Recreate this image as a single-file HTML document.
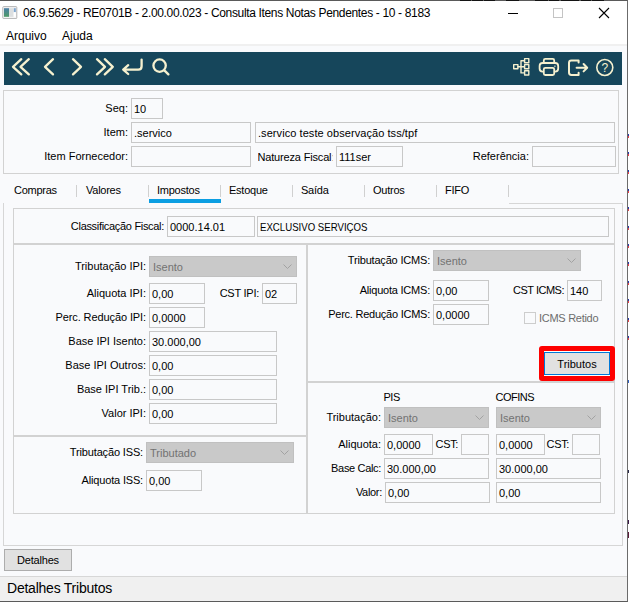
<!DOCTYPE html>
<html><head><meta charset="utf-8"><title>Consulta Itens Notas Pendentes</title>
<style>
html,body{margin:0;padding:0}
body{width:629px;height:602px;position:relative;overflow:hidden;background:#fff;font-family:"Liberation Sans",sans-serif;font-size:11px;color:#000}
.a{position:absolute;box-sizing:border-box}
.win{left:0;top:0;width:628px;height:602px;background:#f9fafc;border-top:1px solid #5a5a5a;border-right:1px solid #6b6b6b;border-bottom:1px solid #5a5a5a}
.title{left:0;top:1px;width:627px;height:25px;background:#fff}
.ttext{left:23px;top:5px;font-size:12px;line-height:16px;white-space:nowrap;letter-spacing:-0.34px}
.menu{left:0;top:26px;width:627px;height:18px;background:#fff}
.menu span{position:absolute;top:2px;font-size:12px;line-height:16px}
.tb{left:4px;top:52px;width:618px;height:33px;background:#16465b}
.box{border:1px solid #d2d2d2}
.inp{position:absolute;box-sizing:border-box;height:21px;border:1px solid #c8c8c8;background:#f9fafc;padding:0 0 0 2px;line-height:20px;white-space:nowrap;font-size:11px}
.cmb{position:absolute;box-sizing:border-box;height:21px;background:#c9c9c9;border:1px solid #c0c0c0;color:#727272;padding:0 0 0 3px;line-height:21px;white-space:nowrap;font-size:11px}
.cmb svg{position:absolute;right:4px;top:7px}
.l{position:absolute;white-space:nowrap;line-height:21px;height:21px;text-align:right;font-size:11px}
.tab{position:absolute;top:182px;height:16px;line-height:16px;font-size:11px;letter-spacing:-0.25px}
.sep{position:absolute;top:185px;width:1px;height:12px;background:#d0d0d0}
.btn{position:absolute;box-sizing:border-box;background:#e1e1e1;border:1px solid #adadad;text-align:center;font-size:11px}
</style></head><body>
<div class="a win"></div>
<div class="a title"></div>
<!-- app icon -->
<svg class="a" style="left:2px;top:6px" width="16" height="13" viewBox="0 0 16 13"><defs><linearGradient id="ig" x1="0" y1="0" x2="0" y2="1"><stop offset="0" stop-color="#4b7fa6"/><stop offset="1" stop-color="#4e9a66"/></linearGradient></defs><rect x="0.8" y="0.6" width="14" height="12" rx="0.8" fill="#f4f4f4" stroke="#b4b4b4"/><rect x="2" y="2.2" width="5" height="8.6" fill="url(#ig)"/><rect x="7" y="2.2" width="4.4" height="8.6" fill="#dcdfe0"/><rect x="11.8" y="2.2" width="2" height="4" fill="#7ea6cf"/><rect x="11.8" y="6.2" width="2" height="4.6" fill="#fff"/></svg>
<div class="a ttext">06.9.5629 - RE0701B - 2.00.00.023 - Consulta Itens Notas Pendentes - 10 - 8183</div>
<!-- window controls -->
<svg class="a" style="left:495px;top:1px" width="131" height="25" viewBox="0 0 131 25"><path d="M13 12.5H23" stroke="#000" stroke-width="1"/><rect x="58.5" y="7.5" width="9" height="9" fill="none" stroke="#c4c4c4"/><path d="M104 7L114 17M114 7L104 17" stroke="#000" stroke-width="1.1"/></svg>
<div class="a menu"><span style="left:6px">Arquivo</span><span style="left:62px">Ajuda</span></div>
<div class="a" style="left:0;top:44px;width:627px;height:2px;background:#f0f0f0"></div>
<div class="a tb"></div>
<!-- toolbar icons -->
<svg class="a" style="left:4px;top:52px" width="619" height="33" viewBox="0 0 619 33" fill="none" stroke="#f6f1cf" stroke-width="2.3" stroke-linecap="round" stroke-linejoin="round">
<path d="M17.3 7.2L9 14.8L17.3 22.4M24.8 7.2L16.5 14.8L24.8 22.4"/>
<path d="M49 7.2L41 14.8L49 22.4"/>
<path d="M69 7.2L77 14.8L69 22.4"/>
<path d="M93 7.2L101 14.8L93 22.4M100.8 7.2L108.8 14.8L100.8 22.4"/>
<path d="M137.6 7.6V14.2Q137.6 17.6 134.2 17.6H119.4M124.2 13.2L119.2 17.6L124.2 22"/>
<circle cx="155.6" cy="13.6" r="6.2"/><path d="M160.4 18.4L164.4 22.4"/>
<g stroke-width="1.4">
<rect x="509.7" y="12.6" width="4.2" height="4.2"/><rect x="520.6" y="6.6" width="4.2" height="4.2"/><rect x="520.6" y="12.6" width="4.2" height="4.2"/><rect x="520.6" y="18.8" width="4.2" height="4.2"/>
<path d="M514 14.7H520.5M517 8.7V20.9M517 8.7H520.5M517 20.9H520.5"/>
</g>
<g stroke-width="1.8">
<path d="M539.8 11V8.4Q539.8 6.9 541.3 6.9H548.7Q550.2 6.9 550.2 8.4V11"/>
<rect x="535.6" y="11" width="18.6" height="8.6" rx="3"/>
<rect x="539.8" y="15.8" width="10.4" height="7.2" rx="1.5" fill="#16465b"/>
<path d="M550.8 14.2H551" stroke-width="1.3"/>
</g>
<g stroke-width="2">
<path d="M574.6 8.4H567.4Q565 8.4 565 10.8V20.6Q565 23 567.4 23H574.6M574.6 8.4V10.6M574.6 23V20.8"/>
<path d="M572.6 15.7H583M579.6 12L583.2 15.7L579.6 19.4"/>
</g>
<circle cx="600.8" cy="15.5" r="8" stroke-width="1.6"/>
<text x="600.8" y="19.6" text-anchor="middle" font-family="Liberation Sans, sans-serif" font-size="12" fill="#f6f1cf" stroke="none">?</text>
</svg>
<div class="a box" style="left:3px;top:90px;width:616px;height:84px"></div>
<div class="l" style="right:501px;top:98px;">Seq:</div>
<div class="inp" style="left:131px;top:98px;width:32px">10</div>
<div class="l" style="right:501px;top:122px;">Item:</div>
<div class="inp" style="left:131px;top:122px;width:120px">.servico</div>
<div class="inp" style="left:255px;top:122px;width:360px;letter-spacing:0.065px">.servico teste observação tss/tpf</div>
<div class="l" style="right:501px;top:146px;">Item Fornecedor:</div>
<div class="inp" style="left:131px;top:146px;width:120px"></div>
<div class="l" style="left:257.5px;top:147px;letter-spacing:-0.17px;width:75.5px;overflow:hidden;text-align:left">Natureza Fiscal<span style="color:#9a9a9a">:</span></div>
<div class="inp" style="left:336px;top:146px;width:67px">111ser</div>
<div class="l" style="right:100px;top:146px;">Referência:</div>
<div class="inp" style="left:532px;top:146px;width:84px"></div>
<div class="tab" style="left:14px">Compras</div>
<div class="tab" style="left:86px">Valores</div>
<div class="tab" style="left:157px">Impostos</div>
<div class="tab" style="left:229px">Estoque</div>
<div class="tab" style="left:301px">Saída</div>
<div class="tab" style="left:373px">Outros</div>
<div class="tab" style="left:445px">FIFO</div>
<div class="sep" style="left:76px"></div>
<div class="sep" style="left:148px"></div>
<div class="sep" style="left:220px"></div>
<div class="sep" style="left:292px"></div>
<div class="sep" style="left:364px"></div>
<div class="sep" style="left:436px"></div>
<div class="sep" style="left:508px"></div>
<div class="a" style="left:149px;top:199px;width:72px;height:4px;background:#0b9ee2"></div>
<div class="a" style="left:3px;top:203px;width:620px;height:343px;border:1px solid #d6d6d6;border-top:none"></div>
<div class="a" style="left:509px;top:203px;width:114px;height:1px;background:#d6d6d6"></div>
<div class="a box" style="left:13px;top:208px;width:602px;height:36px"></div>
<div class="l" style="right:465px;top:216px;letter-spacing:-0.31px">Classificação Fiscal:</div>
<div class="inp" style="left:167px;top:216px;width:88px">0000.14.01</div>
<div class="inp" style="left:257px;top:216px;width:352px"><span style="display:inline-block;transform:scaleX(0.876);transform-origin:0 50%">EXCLUSIVO SERVIÇOS</span></div>
<div class="a box" style="left:13px;top:244px;width:294px;height:192px"></div>
<div class="a box" style="left:13px;top:436px;width:294px;height:78px"></div>
<div class="a box" style="left:307px;top:244px;width:308px;height:138px"></div>
<div class="a box" style="left:307px;top:382px;width:308px;height:132px"></div>
<div class="l" style="right:483px;top:256px;">Tributação IPI:</div>
<div class="cmb" style="left:149px;top:256px;width:148px">Isento<svg width="9" height="6" viewBox="0 0 9 6"><path d="M0.5 0.5L4.5 4.5L8.5 0.5" fill="none" stroke="#a2a2a2" stroke-width="1"/></svg></div>
<div class="l" style="right:483px;top:283px;">Aliquota IPI:</div>
<div class="inp" style="left:149px;top:283px;width:56px">0,00</div>
<div class="l" style="right:370px;top:283px;letter-spacing:-0.25px">CST IPI:</div>
<div class="inp" style="left:262px;top:283px;width:35px">02</div>
<div class="l" style="right:483px;top:307px;letter-spacing:-0.1px">Perc. Redução IPI:</div>
<div class="inp" style="left:149px;top:307px;width:56px">0,0000</div>
<div class="l" style="right:483px;top:331px;">Base IPI Isento:</div>
<div class="inp" style="left:149px;top:331px;width:128px">30.000,00</div>
<div class="l" style="right:483px;top:355px;">Base IPI Outros:</div>
<div class="inp" style="left:149px;top:355px;width:128px">0,00</div>
<div class="l" style="right:483px;top:379px;">Base IPI Trib.:</div>
<div class="inp" style="left:149px;top:379px;width:128px">0,00</div>
<div class="l" style="right:483px;top:403px;">Valor IPI:</div>
<div class="inp" style="left:149px;top:403px;width:128px">0,00</div>
<div class="l" style="right:486px;top:442px;letter-spacing:-0.15px">Tributação ISS:</div>
<div class="cmb" style="left:146px;top:442px;width:148px">Tributado<svg width="9" height="6" viewBox="0 0 9 6"><path d="M0.5 0.5L4.5 4.5L8.5 0.5" fill="none" stroke="#a2a2a2" stroke-width="1"/></svg></div>
<div class="l" style="right:486px;top:470px;letter-spacing:-0.17px">Aliquota ISS:</div>
<div class="inp" style="left:146px;top:470px;width:56px">0,00</div>
<div class="l" style="right:199px;top:250px;letter-spacing:-0.19px">Tributação ICMS:</div>
<div class="cmb" style="left:433px;top:250px;width:148px">Isento<svg width="9" height="6" viewBox="0 0 9 6"><path d="M0.5 0.5L4.5 4.5L8.5 0.5" fill="none" stroke="#a2a2a2" stroke-width="1"/></svg></div>
<div class="l" style="right:199px;top:280px;letter-spacing:-0.22px">Aliquota ICMS:</div>
<div class="inp" style="left:433px;top:280px;width:56px">0,00</div>
<div class="l" style="right:65px;top:280px;letter-spacing:-0.5px">CST ICMS:</div>
<div class="inp" style="left:567px;top:280px;width:35px">140</div>
<div class="l" style="right:199px;top:304px;letter-spacing:-0.24px">Perc. Redução ICMS:</div>
<div class="inp" style="left:433px;top:304px;width:56px">0,0000</div>
<div class="a" style="left:524px;top:312px;width:12px;height:12px;border:1px solid #cdcdcd;background:#f9fafc"></div>
<div class="l" style="left:539px;top:308px;color:#6d6d6d;letter-spacing:-0.28px">ICMS Retido</div>
<div class="btn" style="left:544px;top:352px;width:66px;height:23px;line-height:22px;border-color:#0078d7;box-shadow:0 0 0 1px #fff">Tributos</div>
<div class="a" style="left:539px;top:346px;width:76px;height:35px;border:5px solid #fe0000;border-radius:3px"></div>
<div class="l" style="left:383.5px;top:387px;letter-spacing:-0.5px">PIS</div>
<div class="l" style="left:495.5px;top:387px;letter-spacing:-0.5px">COFINS</div>
<div class="l" style="right:248px;top:407px;">Tributação:</div>
<div class="cmb" style="left:384px;top:407px;width:105px">Isento<svg width="9" height="6" viewBox="0 0 9 6"><path d="M0.5 0.5L4.5 4.5L8.5 0.5" fill="none" stroke="#a2a2a2" stroke-width="1"/></svg></div>
<div class="cmb" style="left:496px;top:407px;width:105px">Isento<svg width="9" height="6" viewBox="0 0 9 6"><path d="M0.5 0.5L4.5 4.5L8.5 0.5" fill="none" stroke="#a2a2a2" stroke-width="1"/></svg></div>
<div class="l" style="right:248px;top:434px;">Aliquota:</div>
<div class="inp" style="left:384px;top:434px;width:49px">0,0000</div>
<div class="l" style="right:171px;top:434px;letter-spacing:-0.35px">CST:</div>
<div class="inp" style="left:461px;top:434px;width:28px"></div>
<div class="inp" style="left:496px;top:434px;width:49px">0,0000</div>
<div class="l" style="right:60px;top:434px;letter-spacing:-0.35px">CST:</div>
<div class="inp" style="left:572px;top:434px;width:28px"></div>
<div class="l" style="right:248px;top:458px;letter-spacing:-0.33px">Base Calc:</div>
<div class="inp" style="left:384px;top:458px;width:105px">30.000,00</div>
<div class="inp" style="left:496px;top:458px;width:105px">30.000,00</div>
<div class="l" style="right:247px;top:482px;letter-spacing:-0.3px">Valor:</div>
<div class="inp" style="left:385px;top:482px;width:105px">0,00</div>
<div class="inp" style="left:496px;top:482px;width:105px">0,00</div>
<div class="btn" style="left:4px;top:549px;width:68px;height:22px;line-height:20px;letter-spacing:-0.2px">Detalhes</div>
<div class="a" style="left:0;top:576px;width:627px;height:25px;background:#f0f0f0;border-top:1px solid #d7d7d7"></div>
<div class="a" style="left:7px;top:580px;font-size:14px;line-height:17px;white-space:nowrap;letter-spacing:-0.23px">Detalhes Tributos</div>
<!-- background window remnants -->
<div class="a" style="left:460px;top:0;width:11px;height:1px;background:#141414"></div>
<div class="a" style="left:472px;top:0;width:11px;height:1px;background:#141414"></div>
<div class="a" style="left:484px;top:0;width:11px;height:1px;background:#141414"></div>
<div class="a" style="left:506px;top:0;width:13px;height:1px;background:#141414"></div>
<div class="a" style="left:535px;top:0;width:13px;height:1px;background:#141414"></div>
<div class="a" style="left:549px;top:0;width:10px;height:1px;background:#141414"></div>
<div class="a" style="left:561px;top:0;width:18px;height:1px;background:#141414"></div>
<div class="a" style="left:581px;top:0;width:10px;height:1px;background:#141414"></div>
<div class="a" style="left:592px;top:0;width:12px;height:1px;background:#141414"></div>
<div class="a" style="left:628px;top:134px;width:1px;height:2px;background:#2a3aa8"></div><div class="a" style="left:628px;top:136px;width:1px;height:2px;background:#e8404a"></div>
<div class="a" style="left:628px;top:152px;width:1px;height:2px;background:#2a3aa8"></div><div class="a" style="left:628px;top:154px;width:1px;height:2px;background:#e8404a"></div>
<div class="a" style="left:628px;top:170px;width:1px;height:2px;background:#2a3aa8"></div><div class="a" style="left:628px;top:172px;width:1px;height:2px;background:#e8404a"></div>
<div class="a" style="left:628px;top:189px;width:1px;height:2px;background:#2a3aa8"></div><div class="a" style="left:628px;top:191px;width:1px;height:2px;background:#e8404a"></div>
<div class="a" style="left:628px;top:207px;width:1px;height:2px;background:#2a3aa8"></div><div class="a" style="left:628px;top:209px;width:1px;height:2px;background:#e8404a"></div>
<div class="a" style="left:628px;top:226px;width:1px;height:2px;background:#2a3aa8"></div><div class="a" style="left:628px;top:228px;width:1px;height:2px;background:#e8404a"></div>
<div class="a" style="left:628px;top:244px;width:1px;height:2px;background:#2a3aa8"></div><div class="a" style="left:628px;top:246px;width:1px;height:2px;background:#e8404a"></div>
<div class="a" style="left:628px;top:262px;width:1px;height:2px;background:#2a3aa8"></div><div class="a" style="left:628px;top:264px;width:1px;height:2px;background:#e8404a"></div>
<div class="a" style="left:628px;top:281px;width:1px;height:2px;background:#2a3aa8"></div><div class="a" style="left:628px;top:283px;width:1px;height:2px;background:#e8404a"></div>
<div class="a" style="left:628px;top:299px;width:1px;height:2px;background:#2a3aa8"></div><div class="a" style="left:628px;top:301px;width:1px;height:2px;background:#e8404a"></div>
<div class="a" style="left:628px;top:318px;width:1px;height:2px;background:#2a3aa8"></div><div class="a" style="left:628px;top:320px;width:1px;height:2px;background:#e8404a"></div>
<div class="a" style="left:628px;top:336px;width:1px;height:2px;background:#2a3aa8"></div><div class="a" style="left:628px;top:338px;width:1px;height:2px;background:#e8404a"></div>
<div class="a" style="left:628px;top:380px;width:1px;height:3px;background:#3060c0"></div>
<div class="a" style="left:628px;top:470px;width:1px;height:3px;background:#2a2a4a"></div>
<div class="a" style="left:628px;top:520px;width:1px;height:4px;background:#3a1a4a"></div>
<div class="a" style="left:628px;top:532px;width:1px;height:6px;background:#5a1a3a"></div>
</body></html>
